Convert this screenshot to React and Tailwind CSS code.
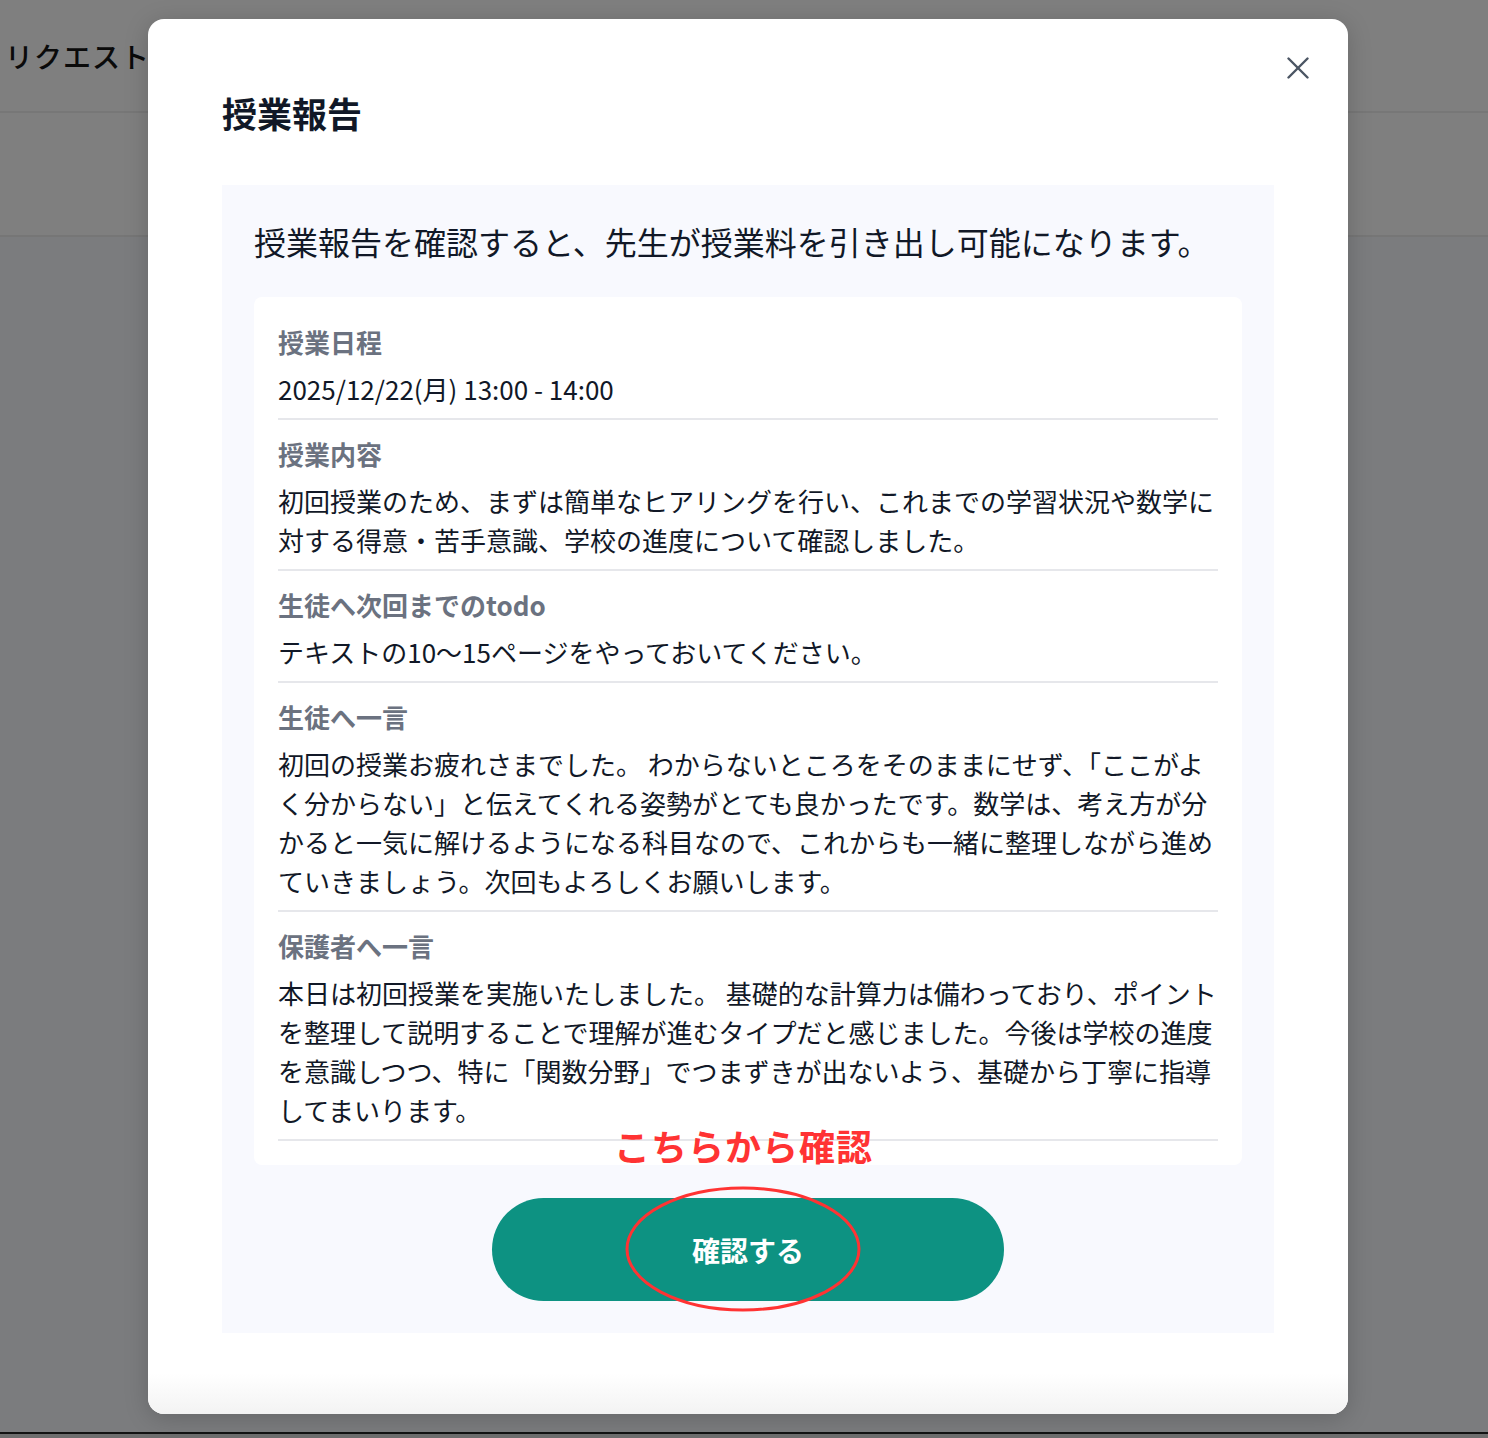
import React from "react";

const sections = [
  { label: "授業日程", lines: ["2025/12/22(月) 13:00 - 14:00"] },
  {
    label: "授業内容",
    lines: [
      "初回授業のため、まずは簡単なヒアリングを行い、これまでの学習状況や数学に",
      "対する得意・苦手意識、学校の進度について確認しました。",
    ],
  },
  { label: "生徒へ次回までのtodo", lines: ["テキストの10〜15ページをやっておいてください。"] },
  {
    label: "生徒へ一言",
    lines: [
      "初回の授業お疲れさまでした。 わからないところをそのままにせず、「ここがよ",
      "く分からない」と伝えてくれる姿勢がとても良かったです。数学は、考え方が分",
      "かると一気に解けるようになる科目なので、これからも一緒に整理しながら進め",
      "ていきましょう。次回もよろしくお願いします。",
    ],
  },
  {
    label: "保護者へ一言",
    lines: [
      "本日は初回授業を実施いたしました。 基礎的な計算力は備わっており、ポイント",
      "を整理して説明することで理解が進むタイプだと感じました。今後は学校の進度",
      "を意識しつつ、特に「関数分野」でつまずきが出ないよう、基礎から丁寧に指導",
      "してまいります。",
    ],
  },
];

export default function App() {
  return (
    <div className="relative h-[1438px] w-full overflow-hidden font-['Noto_Sans_CJK_JP',sans-serif]">
      {/* underlying page */}
      <div className="flex h-full flex-col bg-white">
        <div className="flex h-[113px] items-center border-b-2 border-[#efefef] bg-white px-[5px]">
          <span className="text-[28px] font-medium tracking-[1px] text-[#141414]">リクエスト詳細</span>
        </div>
        <div className="h-[124px] border-b-2 border-[#ececec] bg-white" />
        <div className="flex-1 bg-[#f6f8fc]" />
        <div className="h-[6px] border-t-2 border-[#262626] bg-[#dcdcdc]" />
      </div>

      {/* overlay */}
      <div className="absolute inset-0 bg-black/50" />

      {/* modal */}
      <div className="absolute left-[148px] top-[19px] flex h-[1395px] w-[1200px] flex-col rounded-2xl bg-white px-[74px] pt-[68px] shadow-[0_4px_24px_rgba(0,0,0,0.18)]">
        <button className="absolute right-[38px] top-[37px] flex h-[24px] w-[24px] items-center justify-center">
          <svg width="22" height="22" viewBox="0 0 22 22" fill="none" stroke="#4b5563" strokeWidth="2.4" strokeLinecap="round">
            <path d="M1.5 1.5L20.5 20.5" />
            <path d="M20.5 1.5L1.5 20.5" />
          </svg>
        </button>

        <h2 className="text-[35px] font-bold leading-[51px] text-[#111827]">授業報告</h2>

        <div className="mt-[47px] bg-[#f8f9fe] px-8 pb-8 pt-8">
          <p className="text-[32px] leading-[48px] text-[#111827]">
            授業報告を確認すると、先生が授業料を引き出し可能になります。
          </p>

          <div className="mt-8 rounded-lg bg-white px-6 pb-6 pt-[25px]">
            {sections.map((s, i) => (
              <div
                key={s.label}
                className={`border-b-2 border-[#e6e7eb] pb-[10px] ${i === 0 ? "" : "pt-[14px]"}`}
              >
                <div className="text-[26px] font-bold leading-[39px] text-[#6b7280]">{s.label}</div>
                <div className="mt-2 text-[26px] leading-[39px] text-[#111827]">
                  {s.lines.map((l, j) => (
                    <div key={j} className="whitespace-nowrap">
                      {l}
                    </div>
                  ))}
                </div>
              </div>
            ))}
          </div>

          <div className="relative mt-[33px] flex justify-center">
            <span className="absolute left-[360px] top-[-80px] whitespace-nowrap text-[36px] font-bold leading-[54px] tracking-[1px] text-[#ff3333]">
              こちらから確認
            </span>
            <button className="flex h-[103px] w-[512px] items-center justify-center rounded-full bg-[#0d9282] text-[28px] font-bold text-white">
              確認する
            </button>
            <svg
              className="pointer-events-none absolute left-[371px] top-[-12px]"
              width="240"
              height="130"
              viewBox="0 0 240 130"
              fill="none"
            >
              <ellipse cx="118" cy="63" rx="116" ry="61" stroke="#ff3333" strokeWidth="3" />
            </svg>
          </div>
        </div>

        <div className="-mx-[74px] flex-1 rounded-b-2xl bg-gradient-to-b from-white via-white to-[#f3f3f3]" />
      </div>
    </div>
  );
}
